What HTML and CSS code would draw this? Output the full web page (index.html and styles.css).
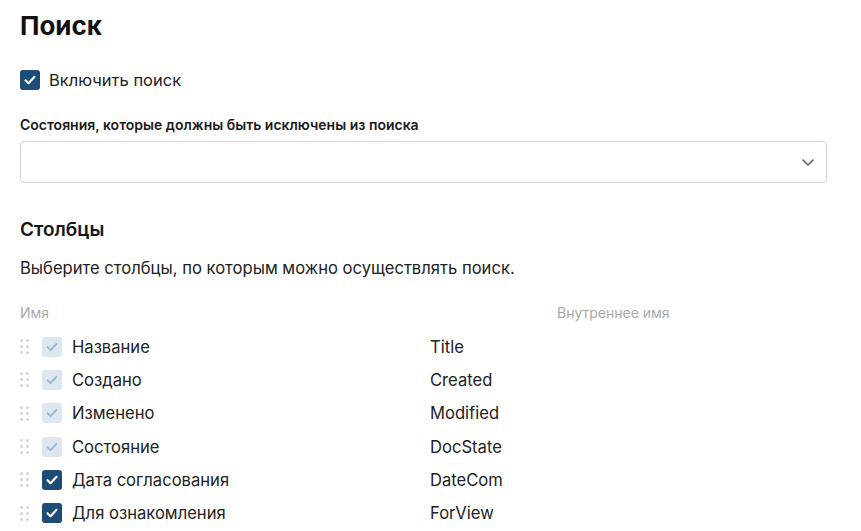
FILE: index.html
```html
<!DOCTYPE html>
<html lang="ru">
<head>
<meta charset="utf-8">
<link rel="stylesheet" href="styles.css">
</head>
<body>
<main class="page">
  <h1 class="title">Поиск</h1>
  <label class="check-line">
    <span class="cb cb-on"><svg viewBox="0 0 20 20"><path d="M5.5 10.2l3 3 6-6.4" /></svg></span>
    <span class="check-text">Включить поиск</span>
  </label>
  <div class="field-label">Состояния, которые должны быть исключены из поиска</div>
  <div class="select">
    <svg class="chev" viewBox="0 0 16 16"><path d="M3 6l5 5 5-5" /></svg>
  </div>
  <h2 class="subtitle">Столбцы</h2>
  <p class="desc">Выберите столбцы, по которым можно осуществлять поиск.</p>
  <div class="table">
    <div class="thead">
      <span class="col-name">Имя</span>
      <span class="col-int">Внутреннее имя</span>
    </div>
    <div class="row">
      <span class="handle"><i></i><i></i><i></i><i></i><i></i><i></i></span>
      <span class="cb cb-dis"><svg viewBox="0 0 20 20"><path d="M5.5 10.2l3 3 6-6.4" /></svg></span>
      <span class="name">Название</span>
      <span class="int">Title</span>
    </div>
    <div class="row">
      <span class="handle"><i></i><i></i><i></i><i></i><i></i><i></i></span>
      <span class="cb cb-dis"><svg viewBox="0 0 20 20"><path d="M5.5 10.2l3 3 6-6.4" /></svg></span>
      <span class="name">Создано</span>
      <span class="int">Created</span>
    </div>
    <div class="row">
      <span class="handle"><i></i><i></i><i></i><i></i><i></i><i></i></span>
      <span class="cb cb-dis"><svg viewBox="0 0 20 20"><path d="M5.5 10.2l3 3 6-6.4" /></svg></span>
      <span class="name">Изменено</span>
      <span class="int">Modified</span>
    </div>
    <div class="row">
      <span class="handle"><i></i><i></i><i></i><i></i><i></i><i></i></span>
      <span class="cb cb-dis"><svg viewBox="0 0 20 20"><path d="M5.5 10.2l3 3 6-6.4" /></svg></span>
      <span class="name">Состояние</span>
      <span class="int">DocState</span>
    </div>
    <div class="row">
      <span class="handle"><i></i><i></i><i></i><i></i><i></i><i></i></span>
      <span class="cb cb-on"><svg viewBox="0 0 20 20"><path d="M5.5 10.2l3 3 6-6.4" /></svg></span>
      <span class="name">Дата согласования</span>
      <span class="int">DateCom</span>
    </div>
    <div class="row">
      <span class="handle"><i></i><i></i><i></i><i></i><i></i><i></i></span>
      <span class="cb cb-on"><svg viewBox="0 0 20 20"><path d="M5.5 10.2l3 3 6-6.4" /></svg></span>
      <span class="name">Для ознакомления</span>
      <span class="int">ForView</span>
    </div>
  </div>
</main>
</body>
</html>
```

FILE: styles.css
```css
html, body {
  margin: 0;
  padding: 0;
  background: #ffffff;
}
body {
  font-family: Inter, "Noto Sans", "DejaVu Sans", sans-serif;
  color: #222222;
}
.page {
  padding: 11px 34px 0 20px;
}
.title {
  margin: 0;
  font-size: 26px;
  line-height: 30px;
  font-weight: 700;
  color: #111111;
}
.check-line {
  display: flex;
  align-items: center;
  gap: 9px;
  margin-top: 29px;
}
.check-text {
  font-size: 16.5px;
  line-height: 20px;
}
.cb {
  width: 20px;
  height: 20px;
  border-radius: 3px;
  display: inline-flex;
  align-items: center;
  justify-content: center;
  flex: none;
}
.cb svg {
  width: 20px;
  height: 20px;
  fill: none;
  stroke-width: 2.2;
  stroke-linecap: round;
  stroke-linejoin: round;
}
.cb-on {
  background: #1d4c74;
}
.cb-on svg {
  stroke: #ffffff;
}
.cb-dis {
  background: #dbe6f1;
}
.cb-dis svg {
  stroke: #9db4cb;
  stroke-width: 1.8;
}
.field-label {
  margin-top: 26px;
  font-size: 14px;
  line-height: 18px;
  font-weight: 600;
  color: #1a1a1a;
}
.select {
  margin-top: 7px;
  height: 40px;
  border: 1px solid #d3d3d3;
  border-radius: 4px;
  display: flex;
  align-items: center;
  justify-content: flex-end;
  padding-right: 10px;
}
.chev {
  width: 16px;
  height: 16px;
  fill: none;
  stroke: #4f6473;
  stroke-width: 1.6;
  stroke-linecap: round;
  stroke-linejoin: round;
}
.subtitle {
  margin: 35px 0 0;
  font-size: 19px;
  line-height: 24px;
  font-weight: 600;
  color: #161616;
}
.desc {
  margin: 15px 0 0;
  font-size: 16.6px;
  line-height: 22px;
  color: #222222;
}
.table {
  margin-top: 25px;
}
.thead {
  display: flex;
  font-size: 14px;
  line-height: 18px;
  color: #a9a9a9;
  padding-bottom: 8px;
}
.thead .col-name {
  width: 537px;
}
.row {
  display: flex;
  align-items: center;
  height: 33.3px;
  font-size: 16.6px;
}
.handle {
  display: grid;
  grid-template-columns: 3px 3px;
  grid-auto-rows: 3px;
  column-gap: 3px;
  row-gap: 3px;
  width: 9px;
  margin-right: 13px;
}
.handle i {
  width: 3px;
  height: 3px;
  border-radius: 50%;
  background: #d4d4d4;
}
.row .name {
  margin-left: 10px;
  width: 358px;
}
.row .int {
  color: #222222;
}
```
